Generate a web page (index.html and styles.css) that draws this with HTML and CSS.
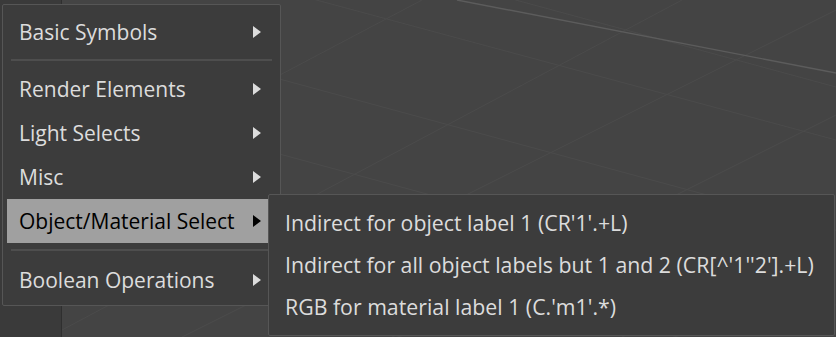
FILE: index.html
```html
<!DOCTYPE html>
<html lang="en">
<head>
    <meta charset="UTF-8">
    <meta name="viewport" content="width=device-width, initial-scale=1.0">
    <title>Context menu</title>
    <link rel="stylesheet" href="styles.css">
</head>
<body>
    <div class="app">
        <div class="sidebar"></div>
        <div class="viewport">
            <!-- grid of the 3d view -->
            <svg class="grid" width="774" height="337" viewBox="0 0 774 337">
                <g stroke="#4b4b4b" stroke-width="1" fill="none">
                    <line x1="0" y1="20" x2="774" y2="230" />
                    <line x1="0" y1="95" x2="774" y2="305" />
                    <line x1="0" y1="170" x2="774" y2="380" />
                    <line x1="0" y1="245" x2="774" y2="455" />
                    <line x1="180" y1="-20" x2="774" y2="140" />
                    <line x1="380" y1="-20" x2="774" y2="87" />
                    <line x1="0" y1="330" x2="620" y2="0" />
                    <line x1="120" y1="337" x2="774" y2="10" />
                    <line x1="330" y1="337" x2="774" y2="115" />
                    <line x1="0" y1="190" x2="360" y2="0" />
                    <line x1="560" y1="337" x2="774" y2="230" />
                </g>
                <line x1="395" y1="0" x2="774" y2="73" stroke="#5c5c5c" stroke-width="1.4" />
            </svg>
        </div>
    </div>

    <div class="menu main-menu">
        <div class="item">Basic Symbols <span class="arrow"></span></div>
        <div class="sep"></div>
        <div class="item">Render Elements <span class="arrow"></span></div>
        <div class="item">Light Selects <span class="arrow"></span></div>
        <div class="item">Misc <span class="arrow"></span></div>
        <div class="item active">Object/Material Select <span class="arrow"></span></div>
        <div class="sep sep-low"></div>
        <div class="item">Boolean Operations <span class="arrow"></span></div>
    </div>

    <div class="menu sub-menu">
        <div class="item">Indirect for object label 1 (CR'1'.+L)</div>
        <div class="item">Indirect for all object labels but 1 and 2 (CR[^'1''2'].+L)</div>
        <div class="item">RGB for material label 1 (C.'m1'.*)</div>
    </div>
</body>
</html>
```

FILE: styles.css
```css
* {
    margin: 0;
    padding: 0;
    box-sizing: border-box;
}

body {
    width: 836px;
    height: 337px;
    overflow: hidden;
    background: #444444;
    font-family: 'Open Sans', 'Noto Sans', sans-serif;
    position: relative;
}

.app {
    display: flex;
    height: 100%;
}

.sidebar {
    width: 62px;
    background: #3a3a3a;
    border-right: 1px solid #2f2f2f;
}

.viewport {
    flex: 1;
    overflow: hidden;
}

.grid {
    display: block;
}

/* menus */
.menu {
    position: absolute;
    background: #3c3c3c;
    border: 1px solid #565656;
    border-radius: 2px;
    color: #dcdcdc;
    font-size: 21px;
}

.main-menu {
    left: 2px;
    top: 4px;
    width: 279px;
    height: 302px;
    padding: 5px 4px;
}

.main-menu .item {
    height: 44px;
    padding: 0 15px 0 12px;
    display: flex;
    align-items: center;
    justify-content: space-between;
}

.item span {
    flex: none;
}

.item.active {
    background: #a0a0a0;
    color: #000;
}

.arrow {
    width: 0;
    height: 0;
    border-top: 6px solid transparent;
    border-bottom: 6px solid transparent;
    border-left: 8px solid #dcdcdc;
}

.item.active .arrow {
    border-left-color: #000;
}

.sep {
    height: 2px;
    background: #4e4e4e;
    margin: 5px 4px 6px 4px;
}

.sep-low {
    margin-top: 6px;
    margin-bottom: 7px;
}

.sub-menu {
    left: 268px;
    top: 194px;
    width: 567px;
    height: 142px;
    padding: 6px 0;
    font-size: 21.3px;
}

.sub-menu .item {
    height: 42px;
    padding: 0 16px;
    display: flex;
    align-items: center;
    white-space: nowrap;
}
```
